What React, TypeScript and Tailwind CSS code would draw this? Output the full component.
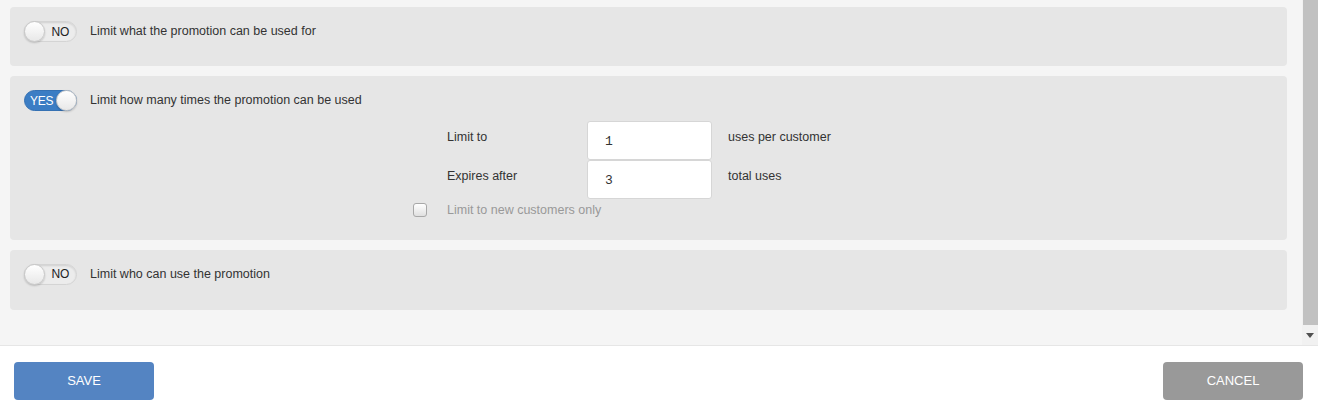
import { useState } from 'react';

type ToggleProps = {
  on: boolean;
  onChange: (v: boolean) => void;
};

function Toggle({ on, onChange }: ToggleProps) {
  return (
    <button
      onClick={() => onChange(!on)}
      className={`relative flex items-center w-[53px] h-[21px] rounded-full shrink-0 border ${
        on
          ? 'bg-[#3b7dc4] border-[#3571b3] justify-start pl-[5px]'
          : 'bg-[#ececec] border-[#d4d4d4] justify-end pr-[7px] shadow-[inset_0_1px_2px_rgba(0,0,0,0.12)]'
      }`}
    >
      <span className={`text-[12px] leading-none tracking-[-0.3px] ${on ? 'text-white' : 'text-[#222]'}`}>{on ? 'YES' : 'NO'}</span>
      <span
        className={`absolute top-[-1px] w-[21px] h-[21px] rounded-full border border-[#c8c8c8] bg-gradient-to-b from-white to-[#e8e8e8] shadow-[0_1px_2px_rgba(0,0,0,0.2)] ${
          on ? 'right-[-1px]' : 'left-[-1px]'
        }`}
      />
    </button>
  );
}

function Panel({ children }: { children: React.ReactNode }) {
  return <div className="bg-[#e6e6e6] rounded-[4px] px-[14px]">{children}</div>;
}

export default function App() {
  const [scope, setScope] = useState(false);
  const [usage, setUsage] = useState(true);
  const [who, setWho] = useState(false);
  const [perCustomer, setPerCustomer] = useState('1');
  const [total, setTotal] = useState('3');
  const [newOnly, setNewOnly] = useState(false);

  return (
    <div className="w-[1318px] h-[413px] flex flex-col bg-white text-[12.5px] text-[#333]" style={{ fontFamily: '"Liberation Sans", Arial, sans-serif' }}>
      <div className="flex h-[346px] bg-[#f5f5f5] border-b border-[#e6e6e6]">
        <div className="flex-1 flex flex-col gap-[10px] pl-[10px] pr-[15px] pt-[7px]">
          <Panel>
            <div className="flex items-center gap-[13px] pt-[14px] pb-[24px]">
              <Toggle on={scope} onChange={setScope} />
              <span>Limit what the promotion can be used for</span>
            </div>
          </Panel>

          <Panel>
            <div className="flex items-center gap-[13px] pt-[14px]">
              <Toggle on={usage} onChange={setUsage} />
              <span>Limit how many times the promotion can be used</span>
            </div>
            <div className="ml-[389px] mt-[10px] pb-[20px] flex flex-col">
              <div className="flex">
                <span className="w-[34px]" />
                <span className="w-[140px] pt-[7px]">Limit to</span>
                <input
                  value={perCustomer}
                  onChange={(e) => setPerCustomer(e.target.value)}
                  className="w-[125px] h-[39px] bg-white border border-[#d6d6d6] rounded-[3px] pl-[17px] pt-[2px] text-[13px] text-[#333] outline-none"
                  style={{ fontFamily: '"Liberation Mono", monospace' }}
                />
                <span className="pl-[16px] pt-[7px]">uses per customer</span>
              </div>
              <div className="flex">
                <span className="w-[34px]" />
                <span className="w-[140px] pt-[7px]">Expires after</span>
                <input
                  value={total}
                  onChange={(e) => setTotal(e.target.value)}
                  className="w-[125px] h-[39px] bg-white border border-[#d6d6d6] rounded-[3px] pl-[17px] pt-[2px] text-[13px] text-[#333] outline-none"
                  style={{ fontFamily: '"Liberation Mono", monospace' }}
                />
                <span className="pl-[16px] pt-[7px]">total uses</span>
              </div>
              <label className="flex items-center mt-[2px]">
                <span className="w-[34px] flex">
                  <input
                    type="checkbox"
                    checked={newOnly}
                    onChange={(e) => setNewOnly(e.target.checked)}
                    className="appearance-none w-[14px] h-[14px] rounded-[3px] border border-[#a8a8a8] bg-gradient-to-b from-white to-[#e0e0e0]"
                  />
                </span>
                <span className="text-[#999]">Limit to new customers only</span>
              </label>
            </div>
          </Panel>

          <Panel>
            <div className="flex items-center gap-[13px] pt-[14px] pb-[25px]">
              <Toggle on={who} onChange={setWho} />
              <span>Limit who can use the promotion</span>
            </div>
          </Panel>
        </div>

        {/* scrollbar */}
        <div className="w-[16px] flex flex-col bg-[#f1f1f1]">
          <div className="flex-1 ml-[1px] bg-[#c1c1c1]" />
          <div className="h-[20px] flex items-center justify-center">
            <svg width="8" height="5" viewBox="0 0 8 5">
              <path d="M0 0h8L4 5z" fill="#505050" />
            </svg>
          </div>
        </div>
      </div>

      <div className="flex justify-between pl-[14px] pr-[15px] pt-[16px]">
        <button className="w-[140px] h-[38px] rounded-[4px] bg-[#5484c2] text-white text-[13px]">SAVE</button>
        <button className="w-[140px] h-[38px] rounded-[4px] bg-[#999999] text-white text-[13px]">CANCEL</button>
      </div>
    </div>
  );
}
